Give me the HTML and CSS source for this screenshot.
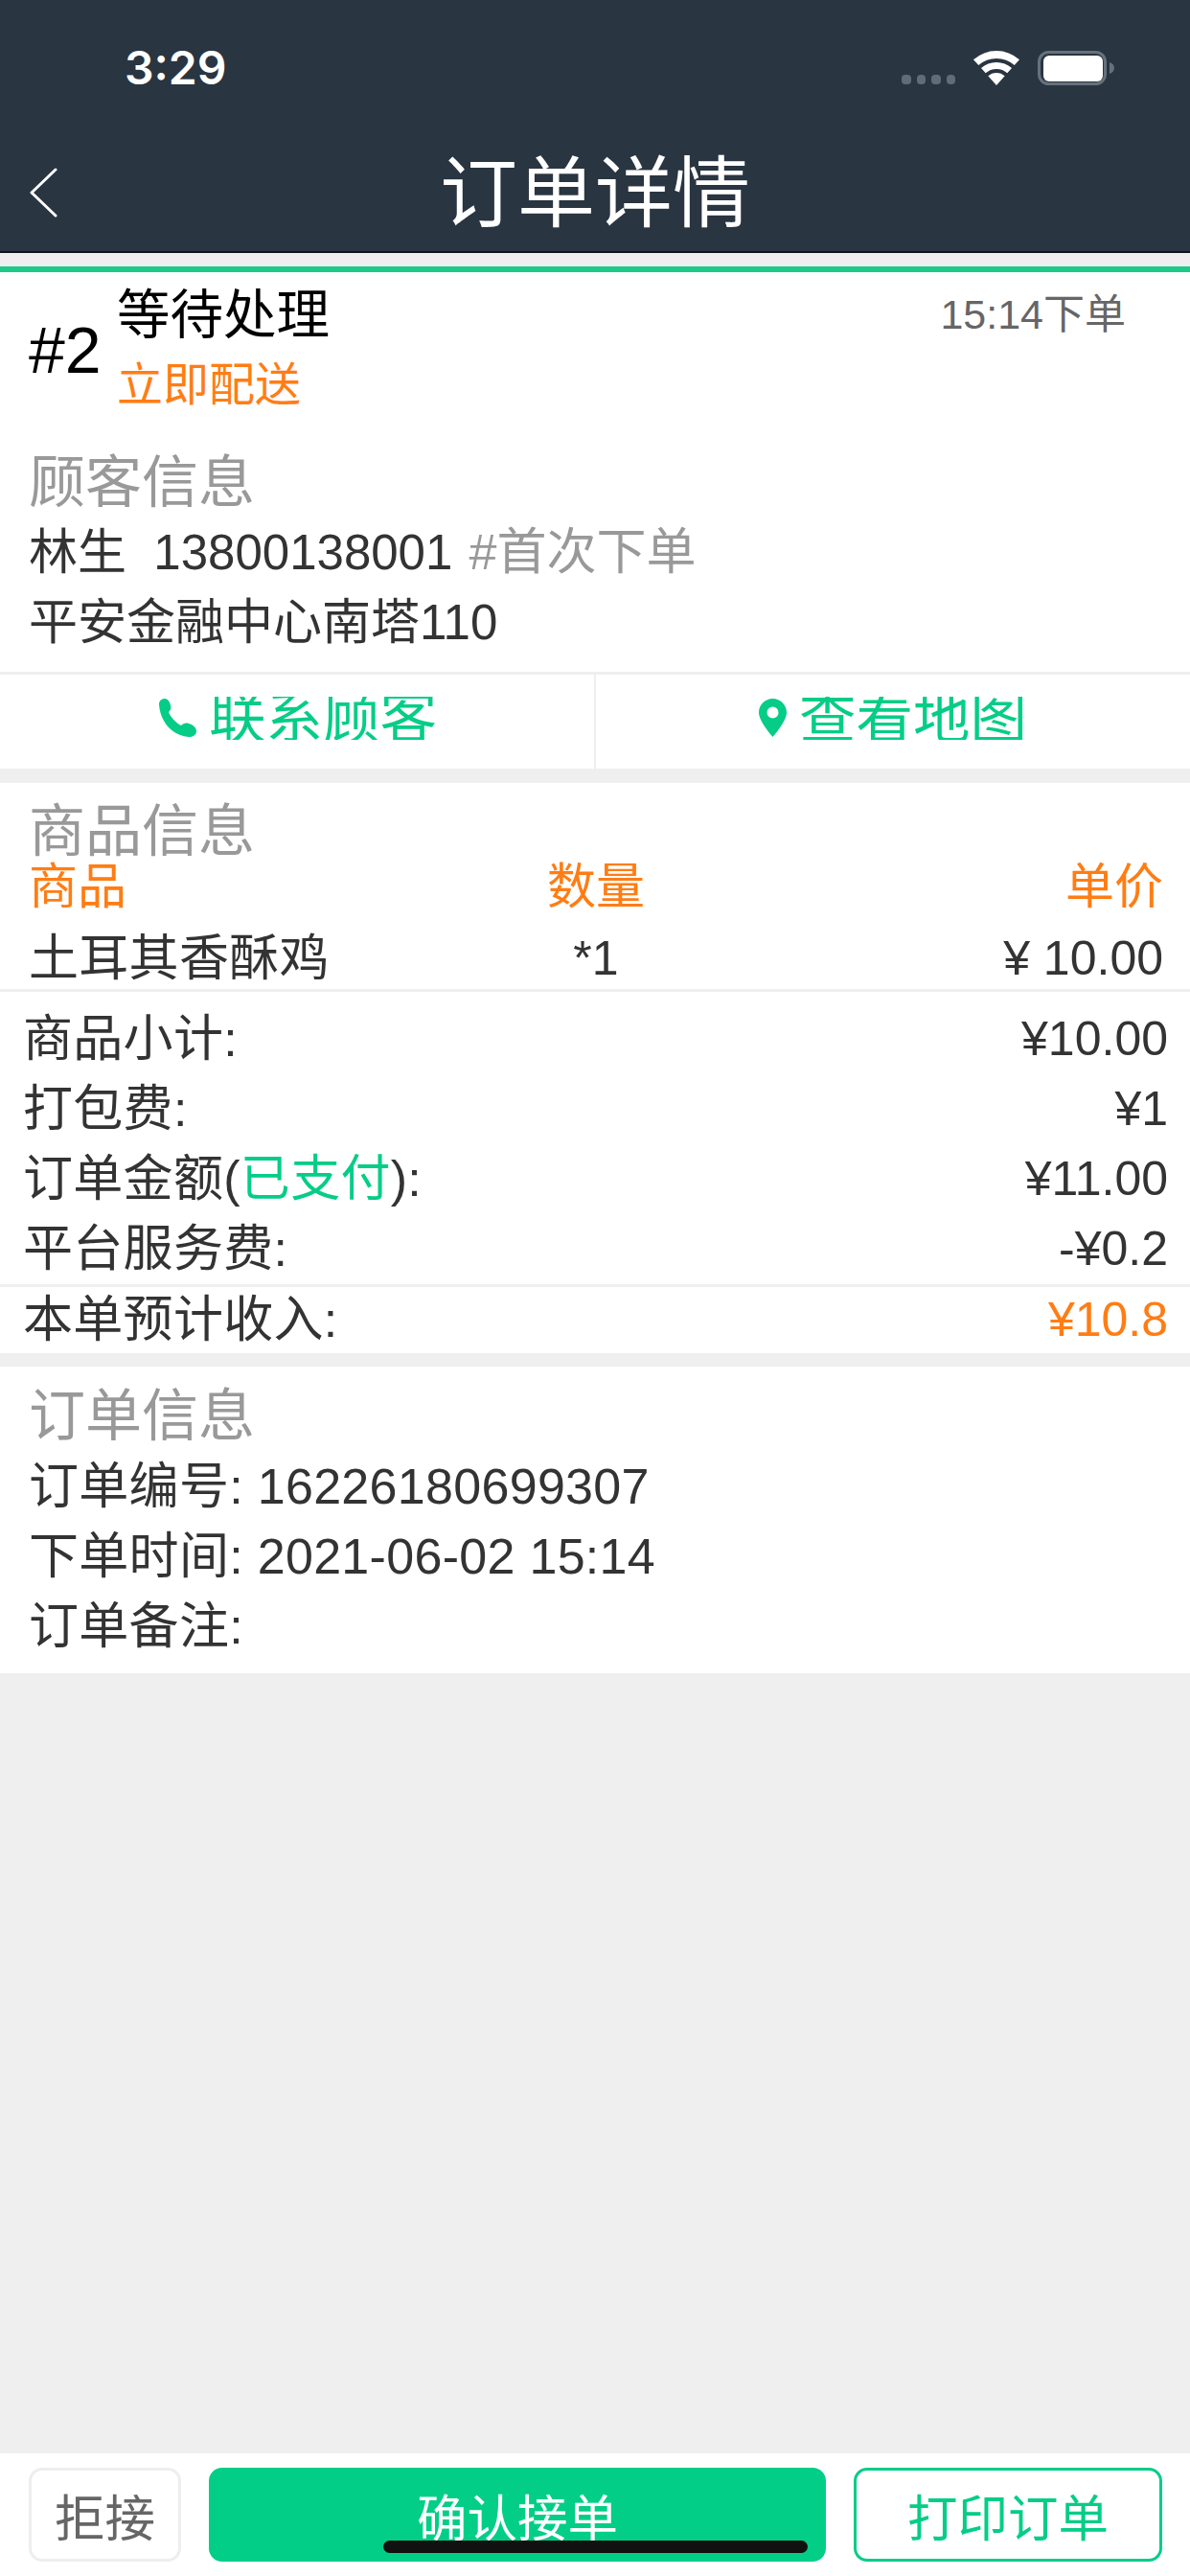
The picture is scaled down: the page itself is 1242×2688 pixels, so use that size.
FILE: index.html
```html
<!DOCTYPE html>
<html lang="zh-CN">
<head>
<meta charset="utf-8">
<title>订单详情</title>
<link rel="stylesheet" href="styles.css">
</head>
<body>
<div class="page">
  <header class="header">
    <div class="status-bar">
      <span class="clock">3:29</span>
      <div class="status-icons">
        <div class="signal"><i></i><i></i><i></i><i></i></div>
        <svg class="wifi" viewBox="0 0 48 36" width="48" height="36">
          <path d="M0 9.2A36 36 0 0 1 48 9.2L42.7 15.1A28 28 0 0 0 5.3 15.1Z"/>
          <path d="M8 18.1A24 24 0 0 1 40 18.1L35.3 23.3A17 17 0 0 0 12.7 23.3Z"/>
          <path d="M24 36L15.3 26.3A13 13 0 0 1 32.7 26.3Z"/>
        </svg>
        <svg class="battery" viewBox="0 0 80 36" width="80" height="36">
          <rect class="battery-case" x="1.5" y="1.5" width="69" height="33" rx="10"/>
          <rect class="battery-level" x="6" y="5" width="62" height="27" rx="6"/>
          <path class="battery-cap" d="M75 12C78 13 80 15 80 18C80 21 78 23 75 24Z"/>
        </svg>
      </div>
    </div>
    <div class="nav-bar">
      <svg class="back" viewBox="0 0 30 52" width="30" height="52">
        <polyline points="28,2 3,26 28,50"/>
      </svg>
      <h1 class="nav-title">订单详情</h1>
    </div>
  </header>

  <main class="content">
    <section class="card customer">
      <div class="order-head">
        <div class="order-no">#2</div>
        <div class="order-state">
          <div class="state-name">等待处理</div>
          <div class="state-mode">立即配送</div>
        </div>
        <div class="order-time">15:14下单</div>
      </div>
      <h2 class="section-title customer-title">顾客信息</h2>
      <div class="line">林生&nbsp;&nbsp;13800138001 <span class="muted">#首次下单</span></div>
      <div class="line">平安金融中心南塔110</div>
    </section>

    <div class="actions">
      <a class="action">
        <svg viewBox="0 0 41 40" width="41" height="40"><path d="M2 6C2 2 5 0 8 0C11 0 13 3 14 7C15 10 14 12 12 14C14 19 19 25 25 28C27 26 30 25 33 26C37 27 41 30 41 34C41 38 37 40 33 40C16 39 3 24 2 6Z"/></svg>
        <span class="action-label">联系顾客</span>
      </a>
      <a class="action">
        <svg viewBox="0 0 29 40" width="29" height="40"><path fill-rule="evenodd" d="M14.5 0C6.5 0 0 6.5 0 14.5C0 24 14.5 40 14.5 40C14.5 40 29 24 29 14.5C29 6.5 22.5 0 14.5 0ZM14.5 8.5A6 6 0 1 1 14.5 20.5A6 6 0 1 1 14.5 8.5Z"/></svg>
        <span class="action-label">查看地图</span>
      </a>
    </div>

    <section class="card goods">
      <h2 class="section-title goods-title">商品信息</h2>
      <div class="goods-row goods-head">
        <span>商品</span><span class="qty">数量</span><span class="price">单价</span>
      </div>
      <div class="goods-row goods-item">
        <span>土耳其香酥鸡</span><span class="qty amount">*1</span><span class="price amount">¥ 10.00</span>
      </div>
      <div class="totals">
        <div class="total-row"><span>商品小计:</span><span class="amount">¥10.00</span></div>
        <div class="total-row"><span>打包费:</span><span class="amount">¥1</span></div>
        <div class="total-row"><span>订单金额(<em class="paid">已支付</em>):</span><span class="amount">¥11.00</span></div>
        <div class="total-row"><span>平台服务费:</span><span class="amount">-¥0.2</span></div>
      </div>
      <div class="total-row income"><span>本单预计收入:</span><span class="amount income-value">¥10.8</span></div>
    </section>

    <section class="card order-info">
      <h2 class="section-title info-title">订单信息</h2>
      <div class="line">订单编号: 16226180699307</div>
      <div class="line">下单时间: 2021-06-02 15:14</div>
      <div class="line">订单备注:</div>
    </section>
  </main>

  <footer class="footer">
    <button class="btn btn-reject">拒接</button>
    <button class="btn btn-confirm">确认接单</button>
    <button class="btn btn-print">打印订单</button>
    <div class="home-indicator"></div>
  </footer>
</div>
</body>
</html>
```

FILE: styles.css
```css
* { box-sizing: border-box; }

html, body { margin: 0; padding: 0; }

body {
  font-family: "Liberation Sans", "Noto Sans CJK SC", sans-serif;
  font-size: 52px;
  letter-spacing: 0.3px;
  color: #333;
  background: #efefef;
}

.page {
  position: relative;
  display: flex;
  flex-direction: column;
  width: 1242px;
  height: 2688px;
  overflow: hidden;
}

/* Dark top area: status bar and navigation */
.header {
  background: #293541;
  border-bottom: 2px solid #10161c;
  height: 264px;
  color: #fff;
}

.status-bar {
  display: flex;
  justify-content: space-between;
  align-items: center;
  height: 140px;
  padding: 0 79px 0 130px;
}

.clock {
  font-family: Inter, "Liberation Sans", sans-serif;
  font-size: 48px;
  font-weight: 600;
  letter-spacing: 0;
}

.status-icons {
  display: flex;
  align-items: center;
  gap: 19px;
  margin-top: 2px;
}

.signal {
  display: flex;
  gap: 6px;
  margin-top: 24px;
}

.signal i {
  display: block;
  width: 9.5px;
  height: 10px;
  border-radius: 4px;
  background: #606c77;
}

.wifi path { fill: #fff; }

.battery-case { fill: none; stroke: #66717c; stroke-width: 3; }
.battery-level { fill: #fff; }
.battery-cap { fill: #66717c; }

.nav-bar {
  position: relative;
  display: flex;
  justify-content: center;
  align-items: center;
  height: 120px;
  padding-top: 4px;
}

.back {
  position: absolute;
  left: 30px;
  top: 35px;
  fill: none;
  stroke: #fff;
  stroke-width: 3;
  stroke-linecap: round;
  stroke-linejoin: round;
}

.nav-title {
  margin: 0;
  font-size: 81px;
  font-weight: 400;
  letter-spacing: 0;
  line-height: 116px;
}

/* Page body */
.content {
  flex: 1;
  padding-top: 14px;
}

.card { background: #fff; }

.customer {
  border-top: 6px solid #1dca89;
  padding: 8px 0 15px;
}

.customer .line {
  font-size: 51px;
  letter-spacing: 0;
}

.order-head {
  display: flex;
  align-items: center;
  padding: 0 67px 0 30px;
}

.order-no {
  width: 92px;
  font-size: 68px;
  letter-spacing: 0;
  color: #000;
}

.order-state { flex: 1; }

.state-name {
  height: 44px;
  margin: 15px 0 14px;
  font-size: 55.5px;
  letter-spacing: 0;
  line-height: 44px;
  color: #000;
}

.state-mode {
  font-size: 48px;
  letter-spacing: 0;
  line-height: 73px;
  color: #ff7d14;
}

.order-time {
  align-self: flex-start;
  font-size: 43px;
  letter-spacing: 0;
  line-height: 73px;
  color: #666;
}

.section-title {
  height: 44px;
  margin: 0 30px;
  font-size: 59px;
  font-weight: 400;
  letter-spacing: 0;
  line-height: 44px;
  color: #999;
}

.customer-title { margin-top: 44px; margin-bottom: 14px; }
.goods-title { margin-bottom: 11px; }
.info-title { margin-bottom: 15px; }

.line {
  padding: 0 30px;
  line-height: 73px;
  white-space: nowrap;
}

.muted {
  margin-left: 3px;
  font-size: 52px;
  color: #999;
}

/* Contact and map links */
.actions {
  display: flex;
  height: 101px;
  background: #fff;
  border-top: 3px solid #efefef;
  margin-bottom: 15px;
}

.action {
  flex: 1;
  display: flex;
  justify-content: center;
  align-items: center;
  gap: 13px;
  padding-bottom: 8px;
  color: #05cd87;
}

.action + .action { border-left: 2px solid #efefef; }

.action svg { fill: #05cd87; }

.action-label {
  display: block;
  height: 45px;
  font-size: 59.5px;
  letter-spacing: 0;
  line-height: 45px;
  overflow: hidden;
}

/* Goods table */
.goods {
  padding-top: 29px;
  margin-bottom: 14px;
}

.goods-row {
  display: grid;
  grid-template-columns: 1fr auto 1fr;
  padding: 0 28px 0 30px;
}

.goods-head {
  font-size: 51px;
  letter-spacing: 0;
  line-height: 50px;
  color: #ff7d14;
}

.goods-item {
  padding-top: 18px;
  line-height: 63px;
}

.qty { text-align: center; }
.price { text-align: right; }

/* Money values and quantities run a little smaller than the labels */
.amount {
  font-size: 50px;
  letter-spacing: 0;
}

.totals {
  border-top: 3px solid #efefef;
  border-bottom: 3px solid #efefef;
  padding-top: 13px;
}

.total-row {
  display: flex;
  justify-content: space-between;
  padding: 0 23px 0 24px;
  line-height: 73px;
}

.paid {
  font-style: normal;
  color: #05cd87;
}

.income { line-height: 69px; }

.income-value { color: #ff7d14; }

.order-info { padding: 30px 0 12px; }

/* Bottom action bar */
.footer {
  position: relative;
  display: flex;
  gap: 29px;
  height: 128px;
  padding: 15px 29px 15px 30px;
  background: #fff;
}

.btn {
  display: block;
  height: 98px;
  margin: 0;
  padding: 0;
  font-family: inherit;
  font-size: 52.5px;
  background: #fff;
  border-radius: 14px;
}

.btn-reject {
  width: 159px;
  border: 3px solid #eee;
  color: #666;
}

.btn-confirm {
  width: 644px;
  border: 0;
  background: #02ce88;
  color: #fff;
}

.btn-print {
  width: 322px;
  border: 3px solid #05cd87;
  color: #05cd87;
}

.home-indicator {
  position: absolute;
  left: 400px;
  top: 91px;
  width: 443px;
  height: 13px;
  border-radius: 7px;
  background: #111;
}
```
